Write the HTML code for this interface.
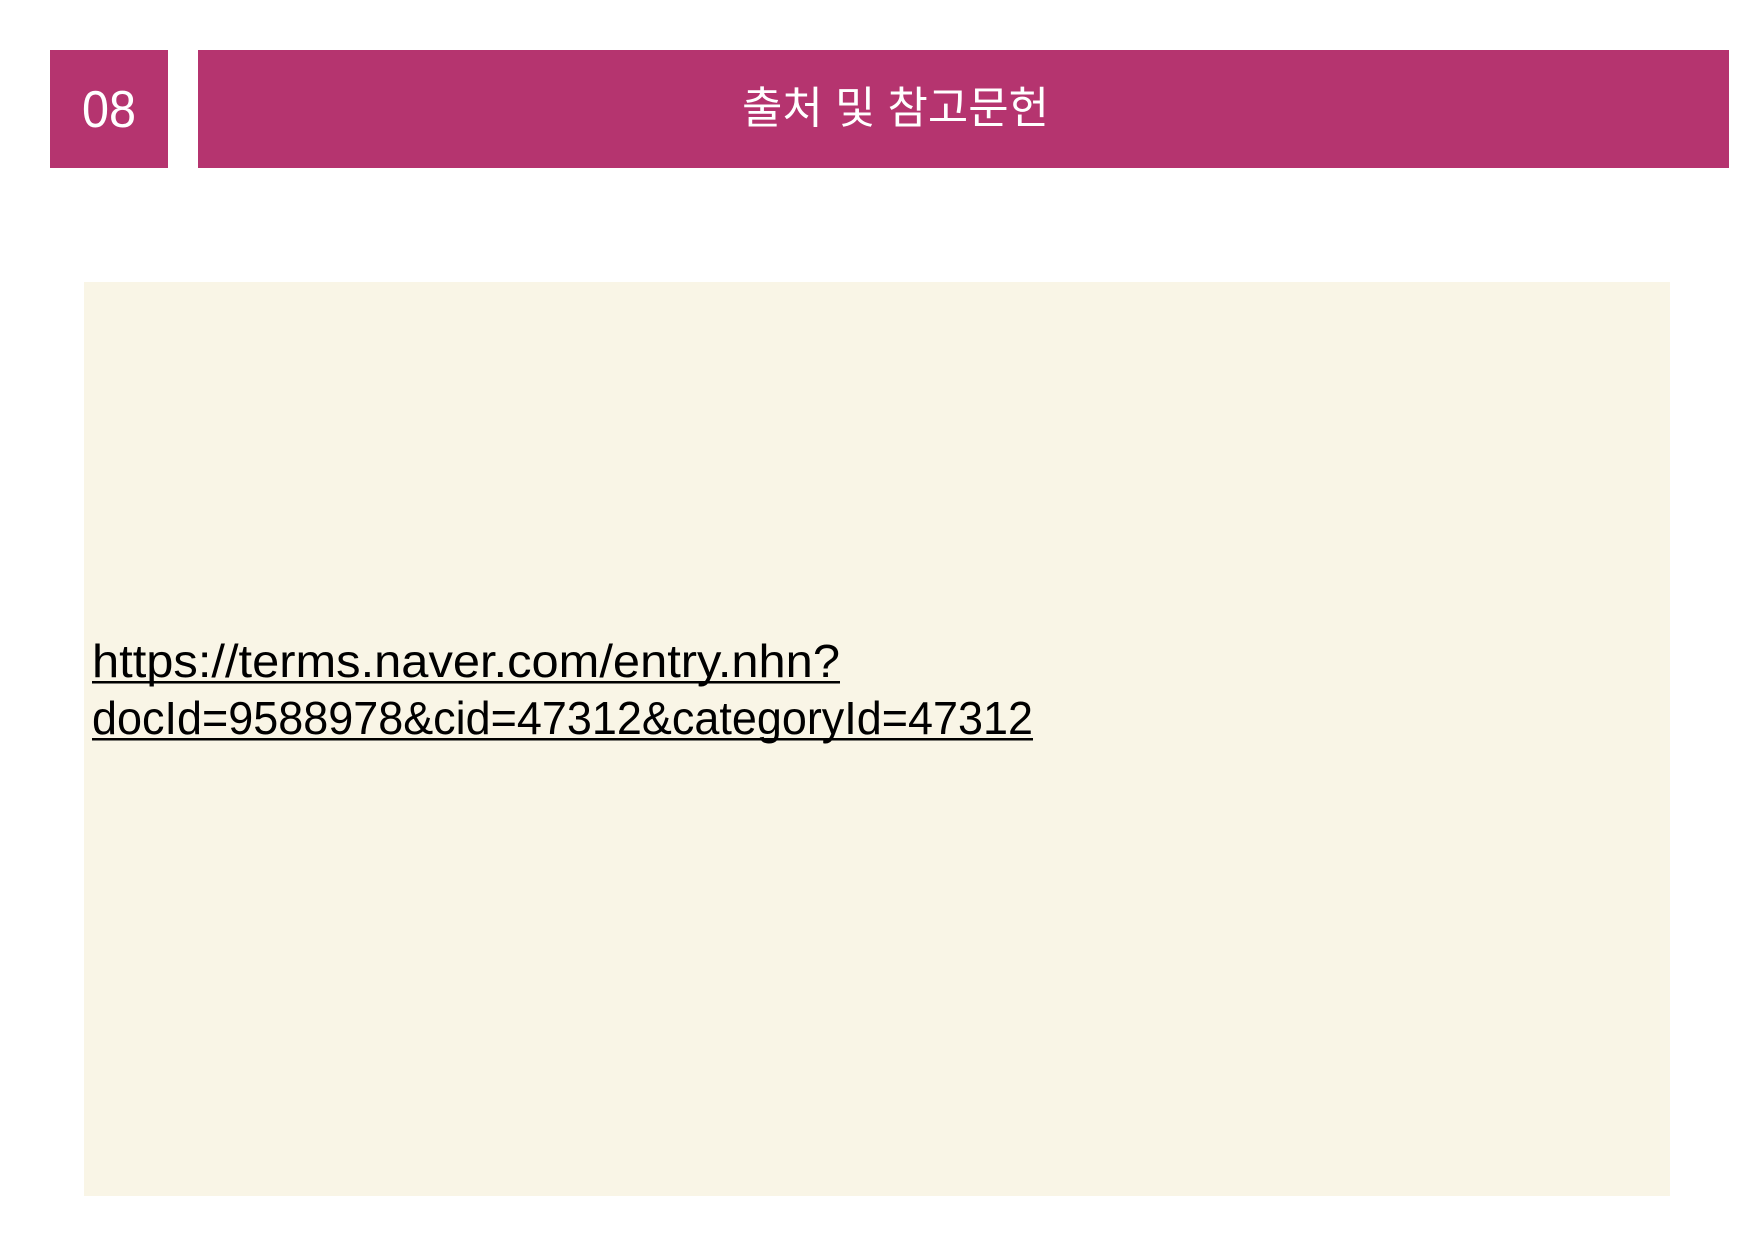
<!DOCTYPE html>
<html><head><meta charset="utf-8"><style>
html,body{margin:0;padding:0;background:#fff;width:1754px;height:1239px;overflow:hidden}
svg{display:block}
</style></head><body>
<svg width="1754" height="1239" xmlns="http://www.w3.org/2000/svg">
<rect x="50" y="50" width="118" height="118" fill="#B5346F"/>
<rect x="198" y="50" width="1531" height="118" fill="#B5346F"/>
<text x="82" y="127" font-family="Liberation Sans, sans-serif" font-size="52" fill="#fff" textLength="54" lengthAdjust="spacingAndGlyphs">08</text>
<text x="742" y="123" font-family="Liberation Sans, 'Noto Sans CJK KR', sans-serif" font-size="44" fill="#fff" textLength="307" lengthAdjust="spacingAndGlyphs">출처 및 참고문헌</text>
<rect x="84" y="282" width="1586" height="914" fill="#F9F5E6"/>
<g font-family="Liberation Sans, sans-serif" font-size="46" fill="#000">
<text x="92" y="677" textLength="748" lengthAdjust="spacingAndGlyphs">https://terms.naver.com/entry.nhn?</text>
<rect x="92" y="681" width="748" height="2.5" fill="#000"/>
<text x="92" y="734" textLength="941" lengthAdjust="spacingAndGlyphs">docId=9588978&amp;cid=47312&amp;categoryId=47312</text>
<rect x="92" y="738" width="941" height="2.5" fill="#000"/>
</g>
</svg>
</body></html>
